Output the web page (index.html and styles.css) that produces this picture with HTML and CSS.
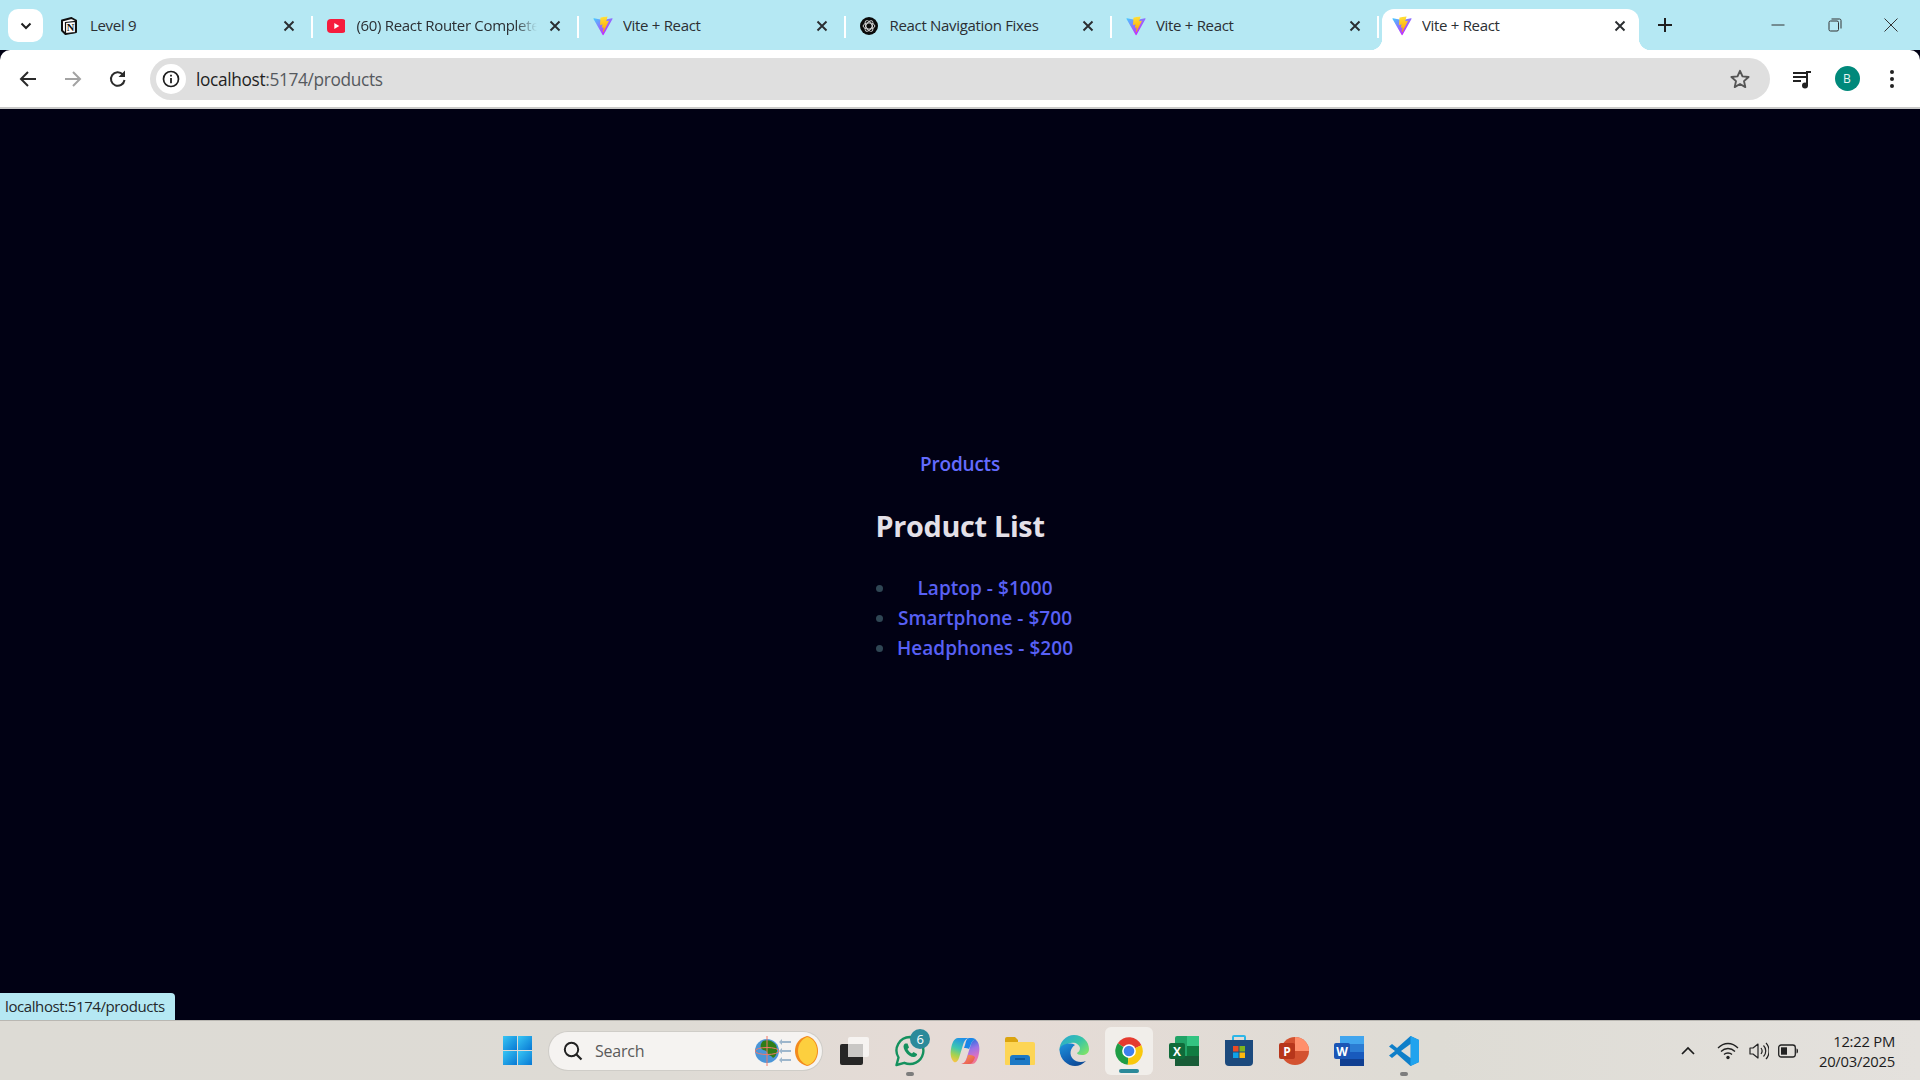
FILE: index.html
```html
<!DOCTYPE html>
<html lang="en">
<head>
<meta charset="utf-8">
<title>Vite + React</title>
<link rel="stylesheet" href="styles.css">
</head>
<body>
<svg class="defs" aria-hidden="true">
  <defs>
    <linearGradient id="vA" x1="6" y1="33" x2="235" y2="344" gradientUnits="userSpaceOnUse"><stop offset="0" stop-color="#41D1FF"/><stop offset="1" stop-color="#BD34FE"/></linearGradient>
    <linearGradient id="vB" x1="194" y1="8" x2="236" y2="292" gradientUnits="userSpaceOnUse"><stop offset="0" stop-color="#FFEA83"/><stop offset=".08" stop-color="#FFDD35"/><stop offset="1" stop-color="#FFA800"/></linearGradient>
    <symbol id="vite" viewBox="0 0 410 404">
      <path fill="url(#vA)" d="M399.641 59.5246L215.643 388.545C211.844 395.338 202.084 395.378 198.228 388.618L10.5817 59.5563C6.38087 52.1896 12.6802 43.2665 21.0281 44.7586L205.223 77.6824C206.398 77.8924 207.601 77.8904 208.776 77.6763L389.119 44.8058C397.439 43.2894 403.768 52.1434 399.641 59.5246Z"/>
      <path fill="url(#vB)" d="M292.965 1.5744L156.801 28.2552C154.563 28.6937 152.906 30.6171 152.771 32.9003L144.395 174.33C144.198 177.662 147.258 180.248 150.51 179.498L188.42 170.749C191.967 169.931 195.172 173.055 194.443 176.622L183.18 231.775C182.422 235.487 185.907 238.661 189.532 237.56L212.947 230.446C216.577 229.344 220.065 232.527 219.297 236.242L201.398 322.875C200.278 328.294 207.486 331.249 210.492 326.603L212.5 323.5L323.454 102.072C325.312 98.3645 322.108 94.137 318.036 94.9228L279.014 102.454C275.347 103.161 272.227 99.746 273.262 96.1583L298.731 7.86689C299.767 4.27314 296.636 0.855181 292.965 1.5744Z"/>
    </symbol>
    <symbol id="x" viewBox="0 0 12 12"><path d="M1.5 1.5l9 9M10.5 1.5l-9 9" stroke="#2a2d30" stroke-width="1.9" fill="none"/></symbol>
    <linearGradient id="winG" x1="0" y1="0" x2="1" y2="1"><stop offset="0" stop-color="#38c6f4"/><stop offset="1" stop-color="#0878d4"/></linearGradient>
    <linearGradient id="edgeA" x1="0" y1="0" x2="1" y2=".8"><stop offset="0" stop-color="#2aa4d8"/><stop offset=".55" stop-color="#37c4a8"/><stop offset="1" stop-color="#7de26a"/></linearGradient>
    <linearGradient id="edgeB" x1="0" y1="0" x2=".6" y2="1"><stop offset="0" stop-color="#1f95dd"/><stop offset=".6" stop-color="#1366b8"/><stop offset="1" stop-color="#0d4c98"/></linearGradient>
    <linearGradient id="copA" x1=".6" y1="0" x2=".3" y2="1"><stop offset="0" stop-color="#1f8fe8"/><stop offset=".45" stop-color="#3ec7b0"/><stop offset=".75" stop-color="#a8d24e"/><stop offset="1" stop-color="#f6c544"/></linearGradient>
    <linearGradient id="copB" x1=".4" y1="0" x2=".7" y2="1"><stop offset="0" stop-color="#1f6ee0"/><stop offset=".4" stop-color="#9a72e6"/><stop offset=".75" stop-color="#e06fc0"/><stop offset="1" stop-color="#f27f8a"/></linearGradient>
    <linearGradient id="copC" x1="0" y1="0" x2="1" y2="1"><stop offset="0" stop-color="#f4a24a"/><stop offset="1" stop-color="#e8475a"/></linearGradient>
  </defs>
</svg>

<header class="strip">
  <button class="tab-search"><svg width="12" height="8" viewBox="0 0 12 8"><path d="M1.5 1.5L6 6l4.5-4.5" stroke="#1f1f1f" stroke-width="2" fill="none"/></svg></button>
  <div class="tabs">
    <div class="tab sep">
      <svg class="fav" viewBox="0 0 18 18"><path d="M2 3.500L11.500 1l4.500 2.500V15l-10.500 2L2 13.500z" fill="#fff" stroke="#111" stroke-width="2" stroke-linejoin="round"/><path d="M5.500 5.500l10-1V15.500l-10 1z" fill="#fff" stroke="#111" stroke-width="1.200"/><text x="10.500" y="14.200" class="fav-n">N</text></svg>
      <span class="title">Level 9</span>
      <svg class="close" viewBox="0 0 12 12"><use href="#x"/></svg>
    </div>
    <div class="tab sep">
      <svg class="fav" viewBox="0 0 18 18"><rect x="0" y="2" width="19" height="14" rx="4" fill="#f61c3d"/><path d="M7.300 6v6l5-3z" fill="#fff"/></svg>
      <span class="title fade">(60) React Router Complete</span>
      <svg class="close" viewBox="0 0 12 12"><use href="#x"/></svg>
    </div>
    <div class="tab sep">
      <svg class="fav vite" viewBox="0 0 410 404"><use href="#vite"/></svg>
      <span class="title">Vite + React</span>
      <svg class="close" viewBox="0 0 12 12"><use href="#x"/></svg>
    </div>
    <div class="tab sep">
      <svg class="fav" viewBox="0 0 20 20"><circle cx="10" cy="10" r="10" fill="#0b0b0b"/><g fill="none" stroke="#d8d8d8" stroke-width="1.100"><ellipse cx="10" cy="10" rx="6.500" ry="3.400"/><ellipse cx="10" cy="10" rx="6.500" ry="3.400" transform="rotate(60 10 10)"/><ellipse cx="10" cy="10" rx="6.500" ry="3.400" transform="rotate(120 10 10)"/></g></svg>
      <span class="title">React Navigation Fixes</span>
      <svg class="close" viewBox="0 0 12 12"><use href="#x"/></svg>
    </div>
    <div class="tab sep">
      <svg class="fav vite" viewBox="0 0 410 404"><use href="#vite"/></svg>
      <span class="title">Vite + React</span>
      <svg class="close" viewBox="0 0 12 12"><use href="#x"/></svg>
    </div>
    <div class="tab active">
      <svg class="fav vite" viewBox="0 0 410 404"><use href="#vite"/></svg>
      <span class="title">Vite + React</span>
      <svg class="close" viewBox="0 0 12 12"><use href="#x"/></svg>
    </div>
    <svg class="plus" viewBox="0 0 14 14"><path d="M7 0v14M0 7h14" stroke="#1f1f1f" stroke-width="2"/></svg>
  </div>
  <div class="win">
    <svg viewBox="0 0 14 14" class="win-ic"><path d="M.5 7h13" stroke="#333" stroke-width="1"/></svg>
    <svg viewBox="0 0 14 14" class="win-ic"><rect x="1" y="3" width="9.500" height="10" rx="1.500" fill="none" stroke="#333"/><path d="M3.500 1H11.500a1.500 1.500 0 0 1 1.500 1.500V10.500" fill="none" stroke="#333"/></svg>
    <svg viewBox="0 0 14 14" class="win-ic"><path d="M.5.5l13 13M13.500.5l-13 13" stroke="#333"/></svg>
  </div>
</header>

<nav class="toolbar">
  <div class="btn"><svg width="20" height="20" viewBox="0 0 20 20"><path d="M18 10H3M10 3l-7 7 7 7" stroke="#2a2a2a" stroke-width="2" fill="none"/></svg></div>
  <div class="btn"><svg width="20" height="20" viewBox="0 0 20 20"><path d="M2 10h15M10 3l7 7-7 7" stroke="#a3a3a3" stroke-width="2" fill="none"/></svg></div>
  <div class="btn"><svg width="20" height="20" viewBox="0 0 20 20"><path d="M16.500 11a6.800 6.800 0 1 1-1.700-5.600" stroke="#2a2a2a" stroke-width="2" fill="none"/><path d="M17 1.500V8h-6.500z" fill="#2a2a2a"/></svg></div>
  <div class="omni">
    <span class="info"><svg width="18" height="18" viewBox="0 0 18 18"><circle cx="9" cy="9" r="7.500" fill="none" stroke="#1f1f1f" stroke-width="1.700"/><path d="M9 8v5.200M9 4.800v1.800" stroke="#1f1f1f" stroke-width="1.800"/></svg></span>
    <span class="url"><b class="host">localhost</b>:5174/products</span>
    <svg class="star" width="22" height="22" viewBox="0 0 22 22"><path d="M11 2.800l2.500 5.600 6.100.6-4.600 4.100 1.300 6-5.300-3.100-5.300 3.100 1.300-6-4.600-4.100 6.100-.6z" fill="none" stroke="#555" stroke-width="1.900" stroke-linejoin="round"/></svg>
  </div>
  <div class="tools">
    <div class="btn"><svg width="20" height="20" viewBox="0 0 20 20"><path d="M1 4h13M1 8h13M1 12h8" stroke="#222" stroke-width="2"/><path d="M15 17V3h4" stroke="#222" stroke-width="2" fill="none"/><circle cx="13" cy="16.500" r="3" fill="#222"/></svg></div>
    <div class="btn"><span class="avatar">B</span></div>
    <div class="btn"><svg width="6" height="20" viewBox="0 0 6 20"><circle cx="3" cy="3" r="2" fill="#222"/><circle cx="3" cy="10" r="2" fill="#222"/><circle cx="3" cy="17" r="2" fill="#222"/></svg></div>
  </div>
</nav>

<main class="page">
  <a class="nav-link">Products</a>
  <h2 class="heading">Product List</h2>
  <ul class="list">
    <li>Laptop - $1000</li>
    <li>Smartphone - $700</li>
    <li>Headphones - $200</li>
  </ul>
  <div class="status">localhost:5174/products</div>
</main>

<footer class="taskbar">
  <div class="slot">
    <svg width="29" height="29" viewBox="0 0 29 29"><rect width="14" height="14" fill="url(#winG)"/><rect x="15" width="14" height="14" fill="url(#winG)"/><rect y="15" width="14" height="14" fill="url(#winG)"/><rect x="15" y="15" width="14" height="14" fill="url(#winG)"/></svg>
  </div>
  <div class="search">
    <svg width="20" height="20" viewBox="0 0 20 20"><circle cx="8.500" cy="8.500" r="6.700" fill="none" stroke="#222" stroke-width="2"/><path d="M13.500 13.500l5 5" stroke="#222" stroke-width="2.200"/></svg>
    <span class="search-text">Search</span>
    <svg class="bing" width="64" height="30" viewBox="0 0 64 30">
      <circle cx="12" cy="15" r="12" fill="#4b96d8"/><path d="M8 5c5-2 10 0 13 4 2 5 1 11-3 13-2-3-5-2-6-6-2-3-5-1-6-4-1-2 0-5 2-7z" fill="#2f7d17"/><ellipse cx="12" cy="15" rx="12" ry="3.500" fill="none" stroke="#f0786a"/><path d="M12 0v30" stroke="#f0786a"/>
      <path d="M36 6H27M36 15H27M36 24H27" stroke="#9db6cc" stroke-width="2"/><path d="M27 3l-3 3 3 3M27 12l-3 3 3 3M27 21l-3 3 3 3" fill="#9db6cc"/>
      <path d="M52 0c-8 2-12 8-12 15s4 13 12 15c6-1 11-7 11-15S58 1 52 0z" fill="#f38a1c"/><path d="M52 1c-5 2-9 7-9 14s4 12 9 14c6-1 10-7 10-14S58 2 52 1z" fill="#fdcf3e"/>
    </svg>
  </div>
  <div class="slot">
    <svg width="29" height="28" viewBox="0 0 29 28"><rect y="7" width="23" height="21" rx="2" fill="#262626"/><rect x="8" width="21" height="20" rx="2" fill="#f7f5f3" opacity=".92"/><rect x="8" y="7" width="15" height="13" fill="#c9c7c5"/></svg>
  </div>
  <div class="slot badged running">
    <svg width="32" height="34" viewBox="0 0 32 34"><path d="M16 3a13.500 13.500 0 0 0-11.500 20.500L2.500 31l7.800-2.200A13.500 13.500 0 1 0 16 3z" fill="none" stroke="#14915e" stroke-width="2.400" stroke-linejoin="round"/><path d="M11 9.500c-2 1.500-2 4 0 7.500 2.500 4 6 6 8.500 6 2 0 4-1.500 3.500-3l-3.500-2-1.500 1.500c-2-.7-3.500-2.500-4.500-4.500l1.500-1.500-1.500-4z" fill="#14915e"/></svg>
    <span class="badge">6</span>
  </div>
  <div class="slot">
    <svg width="30" height="28" viewBox="0 0 30 28"><path d="M8 1H19C15 2 14 5 13 8L9 21C8 24 6 26 4 25 1 23 0 17 1 12 2 6 4 1 8 1Z" fill="url(#copA)"/><path d="M22 27H11C15 26 16 23 17 20L21 7C22 4 24 2 26 3 29 5 30 11 29 16 28 22 26 27 22 27Z" fill="url(#copB)"/><path d="M12 27c3-1 4-3 5-6l1-3c2 0 5 0 7 2-1 4-3 7-6 7z" fill="url(#copC)"/><path d="M19 1h3c2 0 4 1 4 2-2-1-4 1-5 4l-2 5c-1-1-3-1-5-1l1-3c1-3 1-6 4-7z" fill="#1a86e8"/></svg>
  </div>
  <div class="slot">
    <svg width="30" height="30" viewBox="0 0 30 30"><path d="M0 3a2 2 0 0 1 2-2h8l3 3v6H0z" fill="#dba40f"/><path d="M0 6h28a2 2 0 0 1 2 2v20a1 1 0 0 1-1 1H1a1 1 0 0 1-1-1z" fill="#fdd555"/><path d="M5 29v-7a3 3 0 0 1 3-3h14a3 3 0 0 1 3 3v7z" fill="#1d79c5"/><path d="M10 23h10" stroke="#0b4f8a" stroke-width="1.500"/></svg>
  </div>
  <div class="slot">
    <svg width="30" height="31" viewBox="0 0 30 31"><path d="M15 0C24 0 30 7 30 14 30 18 27 20 23 20 20 20 18 19 18 18 20 17 21 15 21 13 20 9 16 7 12 8 6 9 1 13 .5 16 0 7 7 0 15 0Z" fill="url(#edgeA)"/><path d="M.5 15C1 25 9 31 16 31 20 31 24 29 27 26 22 28 17 27 14 24 10 20 11 13 16 10 11 7 1 9 .5 15Z" fill="url(#edgeB)"/></svg>
  </div>
  <div class="slot current">
    <svg width="30" height="30" viewBox="0 0 48 48"><path d="M24 24L43.900 14.700A22 22 0 0 0 6 11.400z" fill="#e53b30"/><path d="M24 24L6 11.400A22 22 0 0 0 22 45.900z" fill="#1f9d45"/><path d="M24 24L22 45.900A22 22 0 0 0 43.900 14.700z" fill="#f9c80e"/><circle cx="24" cy="24" r="11" fill="#fff"/><circle cx="24" cy="24" r="8.500" fill="#3e80ee"/></svg>
    <span class="current-bar"></span>
  </div>
  <div class="slot">
    <svg width="30" height="32" viewBox="0 0 30 32"><rect x="6" y="1" width="24" height="30" rx="2" fill="#21a366"/><rect x="18" y="1" width="12" height="10" fill="#33c481"/><rect x="6" y="11" width="12" height="10" fill="#21a366"/><rect x="18" y="11" width="12" height="10" fill="#107c41"/><rect x="6" y="21" width="24" height="10" fill="#185c37"/><rect y="8" width="16" height="16" rx="2" fill="#0f6b3a"/><text x="8" y="21" class="tile-t">X</text></svg>
  </div>
  <div class="slot">
    <svg width="30" height="32" viewBox="0 0 30 32"><path d="M9 5V2a1 1 0 0 1 1-1h10a1 1 0 0 1 1 1v3" fill="none" stroke="#2cb6e8" stroke-width="2"/><path d="M1 5h28v22a4 4 0 0 1-4 4H5a4 4 0 0 1-4-4z" fill="#1c4a7d"/><rect x="9" y="11" width="5.500" height="5.500" fill="#ea4b24"/><rect x="15.500" y="11" width="5.500" height="5.500" fill="#7fb51e"/><rect x="9" y="17.500" width="5.500" height="5.500" fill="#0ea2e8"/><rect x="15.500" y="17.500" width="5.500" height="5.500" fill="#fdb80d"/></svg>
  </div>
  <div class="slot">
    <svg width="30" height="30" viewBox="0 0 30 30"><circle cx="16" cy="15" r="14" fill="#d35230"/><path d="M16 1a14 14 0 0 1 14 14H16z" fill="#ff8f6b"/><rect y="7" width="16" height="16" rx="2" fill="#b7361b"/><text x="8" y="20" class="tile-t">P</text></svg>
  </div>
  <div class="slot">
    <svg width="30" height="32" viewBox="0 0 30 32"><rect x="6" y="1" width="24" height="30" rx="2" fill="#185abd"/><rect x="6" y="1" width="24" height="8" fill="#41a5ee"/><rect x="6" y="9" width="24" height="8" fill="#2b7cd3"/><rect x="6" y="24" width="24" height="7" fill="#103f91"/><rect y="8" width="16" height="16" rx="2" fill="#1b55b5"/><text x="8" y="21" class="tile-t">W</text></svg>
  </div>
  <div class="slot running">
    <svg width="30" height="30" viewBox="0 0 30 30"><path d="M21.500 0L30 4v22l-8.500 4L8 18l-5 4-3-2.500L6 15 0 10.500 3 8l5 4z" fill="#0f7fc9"/><path d="M21.500 0L30 4v22l-8.500 4z" fill="#20a3ee"/><path d="M21.500 8v14L12 15z" fill="#dfddd7"/></svg>
  </div>
  <div class="tray">
    <svg class="chev" width="16" height="10" viewBox="0 0 16 10"><path d="M2 8l6-6 6 6" stroke="#1c1c1c" stroke-width="1.700" fill="none"/></svg>
    <svg class="tray-ic" width="22" height="18" viewBox="0 0 22 18"><path d="M1 6c6-6 14-6 20 0M4 9.500c4-4 10-4 14 0M7 12.500c2-2 6-2 8 0" fill="none" stroke="#222" stroke-width="1.300"/><circle cx="11" cy="15.500" r="1.700" fill="#222"/></svg>
    <svg class="tray-ic" width="20" height="18" viewBox="0 0 20 18"><path d="M1 6v6h3l5 4V2L4 6z" fill="none" stroke="#222" stroke-width="1.200" stroke-linejoin="round"/><path d="M12 6c1.500 2 1.500 4 0 6M14.500 3.500c3 3 3 8 0 11M17 1c4 4 4 12 0 16" fill="none" stroke="#222" stroke-width="1.200"/></svg>
    <svg class="batt" width="21" height="14" viewBox="0 0 21 14"><rect x=".7" y="1" width="16.600" height="12" rx="2.500" fill="none" stroke="#222" stroke-width="1.300"/><rect x="3" y="3.300" width="6" height="7.400" fill="#222"/><path d="M18.500 4.500c2 0 2 5 0 5z" fill="#222"/></svg>
    <div class="clock"><span>12:22 PM</span><span>20/03/2025</span></div>
  </div>
</footer>
</body>
</html>
```

FILE: styles.css
```css
* { box-sizing: border-box; }
html, body { height: 100%; }
body {
  margin: 0;
  height: 100vh;
  display: flex;
  flex-direction: column;
  overflow: hidden;
  font-family: "Open Sans", "Noto Sans", sans-serif;
  background: #010114;
}
.defs { position: absolute; width: 0; height: 0; }

/* tab strip */
.strip {
  height: 50px;
  background: #b5e8f3;
  display: flex;
  flex: none;
}
.tab-search {
  width: 35px;
  height: 33px;
  margin: 9px 3px 0 8px;
  border: 0;
  padding: 0;
  border-radius: 10px;
  background: #fff;
  display: flex;
  align-items: center;
  justify-content: center;
}
.tabs { display: flex; flex: 1; }
.tab {
  width: 266.500px;
  height: 41px;
  margin-top: 9px;
  padding: 0 14px 0 14px;
  display: flex;
  align-items: center;
  position: relative;
  color: #2b2f33;
}
.sep::after {
  content: "";
  position: absolute;
  right: 0;
  top: 7px;
  width: 2px;
  height: 22px;
  background: #fff;
}
.tab .fav { width: 18px; height: 18px; flex: none; margin: 0 12px 8px 0; }
.tab .fav.vite { width: 20px; height: 20px; margin-right: 10px; }
.title {
  font-size: 15px;
  letter-spacing: -.32px;
  flex: 1;
  white-space: nowrap;
  overflow: hidden;
  margin-bottom: 9px;
}
.fade {
  -webkit-mask-image: linear-gradient(90deg, #000 88%, transparent 100%);
  mask-image: linear-gradient(90deg, #000 88%, transparent 100%);
}
.close { width: 12px; height: 12px; flex: none; margin: 0 4px 8px 12px; }
.active {
  width: 257px;
  margin-left: 3.500px;
  padding: 0 13px 0 10px;
  height: 41px;
  background: #fff;
  border-radius: 12px 12px 0 0;
}
.active .close { margin-right: 0; }
.active::before, .active::after {
  content: "";
  position: absolute;
  bottom: 0;
  width: 12px;
  height: 12px;
}
.active::before { left: -12px; background: radial-gradient(circle at 0 0, transparent 12px, #fff 12.500px); }
.active::after { right: -12px; background: radial-gradient(circle at 100% 0, transparent 12px, #fff 12.500px); }
.plus { width: 14px; height: 14px; margin: 18px 0 0 19px; flex: none; }
.win {
  display: flex;
  width: 177px;
  margin-left: -39px;
  flex: none;
  justify-content: space-between;
  padding: 18px 22px 0 28px;
}
.win-ic { width: 14px; height: 14px; }

/* toolbar */
.toolbar {
  height: 59px;
  flex: none;
  background: #fff;
  border-bottom: 2px solid #c9c9c9;
  border-radius: 10px 10px 0 0;
  display: flex;
  align-items: center;
  padding: 0 5.500px 0 5px;
}
.btn { width: 45px; height: 42px; display: flex; align-items: center; justify-content: center; flex: none; }
.omni {
  flex: 1;
  height: 42px;
  margin: 0 10px;
  background: #dfdfdf;
  border-radius: 21px;
  display: flex;
  align-items: center;
  padding: 0 19px 0 6px;
}
.info {
  width: 30px;
  height: 30px;
  border-radius: 50%;
  background: #fff;
  display: flex;
  align-items: center;
  justify-content: center;
  flex: none;
}
.url {
  margin: 2px 0 0 10px;
  font-size: 17.300px;
  letter-spacing: -.35px;
  color: #55595e;
  flex: 1;
}
.host { font-weight: 400; color: #1f1f1f; }
.tools { display: flex; flex: none; }
.avatar {
  width: 25px;
  height: 25px;
  border-radius: 50%;
  background: #00897b;
  color: #e8f5f3;
  font-size: 12px;
  display: flex;
  align-items: center;
  justify-content: center;
}

/* page */
.page {
  flex: 1;
  position: relative;
  display: flex;
  flex-direction: column;
  align-items: center;
  padding-top: 340px;
}
.nav-link {
  color: #646cff;
  font-size: 19px;
  font-weight: 600;
  line-height: 30px;
  letter-spacing: -.2px;
}
.heading {
  margin: 27px 0 0;
  color: #e4e0e8;
  font-size: 28.800px;
  font-weight: 700;
  line-height: 40px;
  letter-spacing: -.3px;
}
.list {
  margin: 27px 0 0;
  padding: 0 0 0 50px;
  width: 228px;
  text-align: center;
  color: #5860f5;
  font-size: 19px;
  font-weight: 600;
  line-height: 30px;
  letter-spacing: .05px;
  white-space: nowrap;
}
.list li::marker { color: #2f4654; }
.status {
  position: absolute;
  left: 0;
  bottom: 0;
  height: 27px;
  width: 175px;
  padding-left: 5px;
  background: #b5e8f3;
  border-top-right-radius: 4px;
  color: #24282c;
  font-size: 15px;
  letter-spacing: -.4px;
  line-height: 27px;
  white-space: nowrap;
}

/* taskbar */
.taskbar {
  height: 60px;
  flex: none;
  border-top: 1px solid #b9b7b2;
  background: linear-gradient(90deg, #dddbd5 0%, #dedbd5 35%, #e6dbd6 50%, #dedcd5 75%, #e4e1dd 100%);
  display: flex;
  align-items: center;
  padding-left: 490.500px;
}
.slot {
  width: 54.900px;
  height: 48px;
  flex: none;
  position: relative;
  display: flex;
  align-items: center;
  justify-content: center;
}
.search {
  width: 273px;
  height: 38px;
  margin: 0 5.500px 0 3.500px;
  flex: none;
  border-radius: 19px;
  background: #f5f3f1;
  box-shadow: 0 0 0 1px #cfcdc8;
  display: flex;
  align-items: center;
  padding: 0 3px 0 14px;
  overflow: hidden;
}
.search-text { margin-left: 12px; flex: 1; color: #5a5a5a; font-size: 16px; letter-spacing: -.2px; }
.bing { flex: none; }
.current { background: #f1eeea; border-radius: 6px; width: 48px; margin: 0 3.450px; }
.current-bar {
  position: absolute;
  bottom: 2px;
  left: 14px;
  width: 20px;
  height: 4px;
  border-radius: 2px;
  background: #2b8a9a;
}
.running::after {
  content: "";
  position: absolute;
  bottom: -1px;
  left: 50%;
  margin-left: -4px;
  width: 8px;
  height: 4px;
  border-radius: 2px;
  background: #7d7d7d;
}
.badge {
  position: absolute;
  top: 2px;
  right: 7px;
  width: 20px;
  height: 20px;
  border-radius: 50%;
  background: #2b8a9a;
  color: #fff;
  font-size: 13px;
  line-height: 20px;
  text-align: center;
}
.tile-t {
  fill: #fff;
  font-family: "Open Sans", sans-serif;
  font-size: 12px;
  font-weight: 700;
  text-anchor: middle;
}
.fav-n {
  fill: #111;
  font-family: "Liberation Serif", serif;
  font-size: 10.500px;
  font-weight: 700;
  text-anchor: middle;
}
.tray {
  margin-left: auto;
  display: flex;
  align-items: center;
  padding-right: 25px;
}
.chev { flex: none; margin-right: 21px; }
.tray-ic { flex: none; margin-right: 9.500px; }
.batt { flex: none; }
.clock {
  margin-left: 20px;
  width: 76px;
  display: flex;
  flex-direction: column;
  align-items: flex-end;
  color: #1c1c1c;
  font-size: 14.800px;
  line-height: 20px;
  letter-spacing: -.25px;
  white-space: nowrap;
}
```
